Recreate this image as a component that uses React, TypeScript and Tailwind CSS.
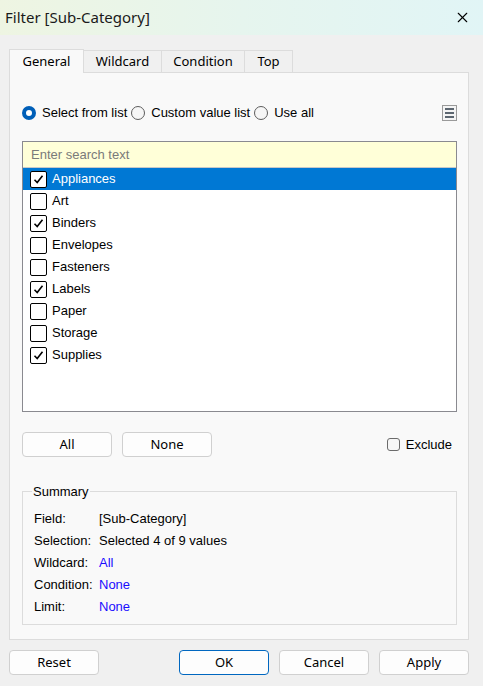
import { X } from 'lucide-react'

const items = [
    { name: 'Appliances', checked: true },
    { name: 'Art', checked: false },
    { name: 'Binders', checked: true },
    { name: 'Envelopes', checked: false },
    { name: 'Fasteners', checked: false },
    { name: 'Labels', checked: true },
    { name: 'Paper', checked: false },
    { name: 'Storage', checked: false },
    { name: 'Supplies', checked: true }
]

const summary = [
    { label: 'Field:', value: '[Sub-Category]', link: false },
    { label: 'Selection:', value: 'Selected 4 of 9 values', link: false },
    { label: 'Wildcard:', value: 'All', link: true },
    { label: 'Condition:', value: 'None', link: true },
    { label: 'Limit:', value: 'None', link: true }
]

const ui = { fontFamily: '"Liberation Sans", Arial, sans-serif' }
const seg = { fontFamily: '"Noto Sans", "Open Sans", sans-serif' }

function Check({ checked }: { checked: boolean }) {
    return (
        <span className="w-[17px] h-[17px] shrink-0 rounded-[2px] border border-black bg-white flex items-center justify-center">
            {checked && (
                <svg width="11" height="11" viewBox="0 0 11 11">
                    <path d="M1.5 5.8 L4.2 8.5 L9.5 1.8" fill="none" stroke="black" strokeWidth="1.6" />
                </svg>
            )}
        </span>
    )
}

function Radio({ on }: { on: boolean }) {
    return on ? (
        <span className="block w-[14px] h-[14px] rounded-full border-[4px] border-[#005fb8] bg-white shrink-0" />
    ) : (
        <span className="block w-[14px] h-[14px] rounded-full border border-[#5d5d5d] bg-[#f6f6f6] shrink-0" />
    )
}

function Btn({ label, primary }: { label: string; primary?: boolean }) {
    return (
        <button
            className={`w-[90px] h-[25px] rounded-[4px] bg-[#fdfdfd] text-[13px] text-black flex items-center justify-center ${primary ? 'border border-[#0067c0]' : 'border border-[#d0d0d0]'}`}
            style={seg}
        >
            {label}
        </button>
    )
}

export default function App() {
    return (
        <div className="w-[483px] h-[686px] bg-[#f0f0f0] flex flex-col text-[13px] text-black overflow-hidden" style={ui}>
            <div className="h-[35px] shrink-0 flex items-center justify-between pl-[5px] pr-[12px] bg-gradient-to-r from-[#eef5e2] via-[#e6f5ee] to-[#e1f5f6]">
                <span className="text-[15px] text-[#1a1a1a]" style={seg}>Filter [Sub-Category]</span>
                <X size={17} strokeWidth={1.5} className="text-black" />
            </div>

            <div className="px-[9px] pt-[13px] flex flex-col flex-1">
                <div className="flex items-end h-[24px] text-[13px]" style={seg}>
                    <div className="w-[75px] h-[24px] bg-[#f9f9f9] border border-b-0 border-[#dcdcdc] flex items-center justify-center relative top-[1px]">General</div>
                    <div className="w-[78px] h-[22px] bg-[#f0f0f0] border border-b-0 border-l-0 border-[#dcdcdc] flex items-center justify-center">Wildcard</div>
                    <div className="w-[83px] h-[22px] bg-[#f0f0f0] border border-b-0 border-l-0 border-[#dcdcdc] flex items-center justify-center">Condition</div>
                    <div className="w-[48px] h-[22px] bg-[#f0f0f0] border border-b-0 border-l-0 border-[#dcdcdc] flex items-center justify-center">Top</div>
                </div>

                <div className="w-[460px] h-[568px] bg-[#f9f9f9] border border-[#dcdcdc] px-[12px] flex flex-col">
                    <div className="mt-[30px] h-[20px] flex items-center">
                        <Radio on />
                        <span className="ml-[6px]">Select from list</span>
                        <span className="ml-[4px]"><Radio on={false} /></span>
                        <span className="ml-[6px]">Custom value list</span>
                        <span className="ml-[4px]"><Radio on={false} /></span>
                        <span className="ml-[6px]">Use all</span>
                        <span className="ml-auto mr-[-1px] w-[15px] h-[16px] border border-[#9a9a9a] bg-[#f4f4f4] flex flex-col items-center justify-center gap-[2px]">
                            <span className="w-[9px] h-[2px] bg-[#5c6670]" />
                            <span className="w-[9px] h-[2px] bg-[#5c6670]" />
                            <span className="w-[9px] h-[2px] bg-[#5c6670]" />
                        </span>
                    </div>

                    <div className="mt-[18px] w-[435px] h-[271px] border border-[#8a8a90] bg-white flex flex-col">
                        <div className="h-[26px] shrink-0 bg-[#ffffd8] border-b border-[#c8c8c8] flex items-center px-[8px] text-[#7a7a7a]">
                            Enter search text
                        </div>
                        {items.map((it, i) => (
                            <div
                                key={it.name}
                                className={`h-[22px] shrink-0 flex items-center pl-[7px] gap-[5px] ${i === 0 ? 'bg-[#0078d4] text-white' : 'text-black'}`}
                            >
                                <Check checked={it.checked} />
                                <span>{it.name}</span>
                            </div>
                        ))}
                    </div>

                    <div className="mt-[20px] h-[25px] flex items-center">
                        <Btn label="All" />
                        <span className="ml-[10px]"><Btn label="None" /></span>
                        <span className="ml-auto flex items-center mr-[4px]">
                            <span className="block w-[13px] h-[13px] rounded-[3px] border border-[#6b6b6b] bg-[#f6f6f6]" />
                            <span className="ml-[6px]">Exclude</span>
                        </span>
                    </div>

                    <fieldset className="mt-[25px] w-[435px] h-[143px] border border-[#dcdcdc] px-[11px] pt-[6px]">
                        <legend className="ml-[-2px] px-[1px]">Summary</legend>
                        {summary.map(s => (
                            <div key={s.label} className="h-[22px] flex items-center">
                                <span className="w-[65px]">{s.label}</span>
                                <span className={s.link ? 'text-[#1a0dff]' : 'text-black'}>{s.value}</span>
                            </div>
                        ))}
                    </fieldset>
                </div>

                <div className="mt-[10px] flex items-center">
                    <Btn label="Reset" />
                    <span className="ml-[80px]"><Btn label="OK" primary /></span>
                    <span className="ml-[10px]"><Btn label="Cancel" /></span>
                    <span className="ml-[10px]"><Btn label="Apply" /></span>
                </div>
            </div>
        </div>
    )
}
